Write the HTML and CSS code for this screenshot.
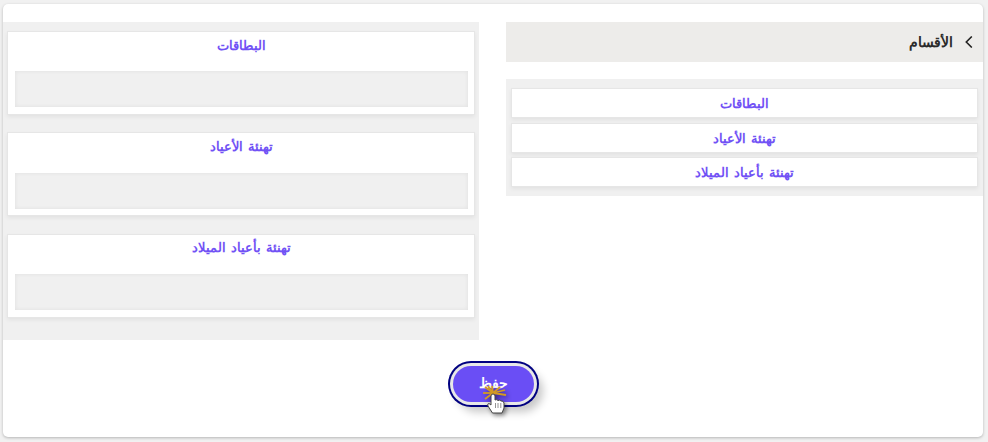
FILE: index.html
```html
<!DOCTYPE html>
<html lang="ar" dir="rtl">
<head>
<meta charset="utf-8">
<title>الأقسام</title>
<link rel="stylesheet" href="styles.css">
</head>
<body>
<main class="panel">
  <div class="columns">
    <section class="sections">
      <header class="sections-head">
        <svg class="chev" width="8" height="12" viewBox="0 0 8 12"><path d="M6.800 .5 L1.300 6 L6.800 11.500" fill="none" stroke="#222" stroke-width="1.600"/></svg>
        <span class="sections-title">الأقسام</span>
      </header>
      <ul class="list">
        <li>البطاقات</li>
        <li>تهنئة الأعياد</li>
        <li>تهنئة بأعياد الميلاد</li>
      </ul>
    </section>
    <section class="fields">
      <div class="card"><h3>البطاقات</h3><div class="box"></div></div>
      <div class="card"><h3>تهنئة الأعياد</h3><div class="box"></div></div>
      <div class="card"><h3>تهنئة بأعياد الميلاد</h3><div class="box"></div></div>
    </section>
  </div>
  <div class="actions">
    <button class="save" type="button">حفظ
      <svg class="pointer" width="30" height="34" viewBox="0 0 30 34">
        <g stroke="#d39a22" stroke-width="1.800">
          <path d="M10 8 L2 2"/><path d="M10 8 L9 1"/><path d="M10 8 L17 2"/><path d="M10 8 L22 5"/><path d="M10 8 L0 8"/><path d="M10 8 L23 10"/><path d="M10 8 L2 14"/><path d="M10 8 L5 1"/>
        </g>
        <path d="M9.500 28 L5 21 Q4 18.500 6 18.500 L8 20 L8 11 Q8 9 10 9 Q12 9 12 11 L12 15 Q14 14 15 15.500 Q17 14.500 18 16 Q20.500 15.500 21 18 L21 23 L19 28 Z" fill="#fff" stroke="#444" stroke-width="1"/>
        <path d="M12.500 18 V23 M15 18 V23 M17.800 18 V23" stroke="#777" stroke-width=".8"/>
      </svg>
    </button>
  </div>
</main>
</body>
</html>
```
FILE: styles.css
```css
* { box-sizing: border-box; }
html, body { margin: 0; height: 100%; }
body {
  background: #f1f1f1;
  font-family: "Noto Sans", sans-serif;
  padding: 4px 5px 5px 3px;
  overflow: hidden;
}
.panel {
  background: #fff;
  border-radius: 5px;
  height: 433px;
  padding-top: 18px;
  box-shadow: 0 1px 3px rgba(0,0,0,.25);
}
.columns {
  display: flex;
  gap: 27px;
  align-items: flex-start;
}
.sections { width: 477px; }
.sections-head {
  height: 40px;
  background: #edecea;
  display: flex;
  align-items: center;
  gap: 12px;
  padding-right: 10px;
  font-size: 13.600px;
  font-weight: 700;
  color: #2a2a2a;
}
.sections-title { margin-bottom: 2px; }
.list {
  list-style: none;
  margin: 17px 0 0;
  padding: 9px 5px;
  background: #f0f0f0;
  display: flex;
  flex-direction: column;
  gap: 4.500px;
}
.list li {
  height: 30px;
  background: #fff;
  border: 1px solid #e6e6e6;
  box-shadow: 0 2px 4px rgba(0,0,0,.06);
  text-align: center;
  font-size: 13px;
  font-weight: 700;
  word-spacing: 2px;
  line-height: 28px;
  color: #7152f5;
}
.fields {
  width: 476px;
  height: 318px;
  background: #f0f0f0;
  padding: 9px 4px 0;
  display: flex;
  flex-direction: column;
  gap: 17.250px;
}
.card {
  height: 84px;
  background: #fff;
  border: 1px solid #e6e6e6;
  box-shadow: 0 2px 4px rgba(0,0,0,.06);
  padding: 4.600px 6px 0 7px;
}
.card h3 {
  margin: 0 0 18.800px;
  height: 16px;
  text-align: center;
  font-size: 13px;
  font-weight: 700;
  word-spacing: 2px;
  line-height: 16px;
  color: #7152f5;
}
.box {
  height: 36px;
  background: #f0f0f0;
  box-shadow: inset 0 0 4px rgba(0,0,0,.07);
}
.actions {
  display: flex;
  justify-content: center;
  margin-top: 26px;
}
.save {
  position: relative;
  width: 81px;
  height: 36px;
  border: 0;
  border-radius: 18px;
  background: #6a4ef5;
  color: #fff;
  font: 700 13.600px "Noto Sans", sans-serif;
  padding: 0 0 3px 1px;
  box-shadow: 0 0 0 3px #e8e8e8, 0 0 0 5px #000080, 6px 7px 9px 3px rgba(0,0,0,.22);
}
.pointer {
  position: absolute;
  left: 30px;
  top: 19px;
  filter: drop-shadow(2px 2px 2px rgba(0,0,0,.45));
}
```
